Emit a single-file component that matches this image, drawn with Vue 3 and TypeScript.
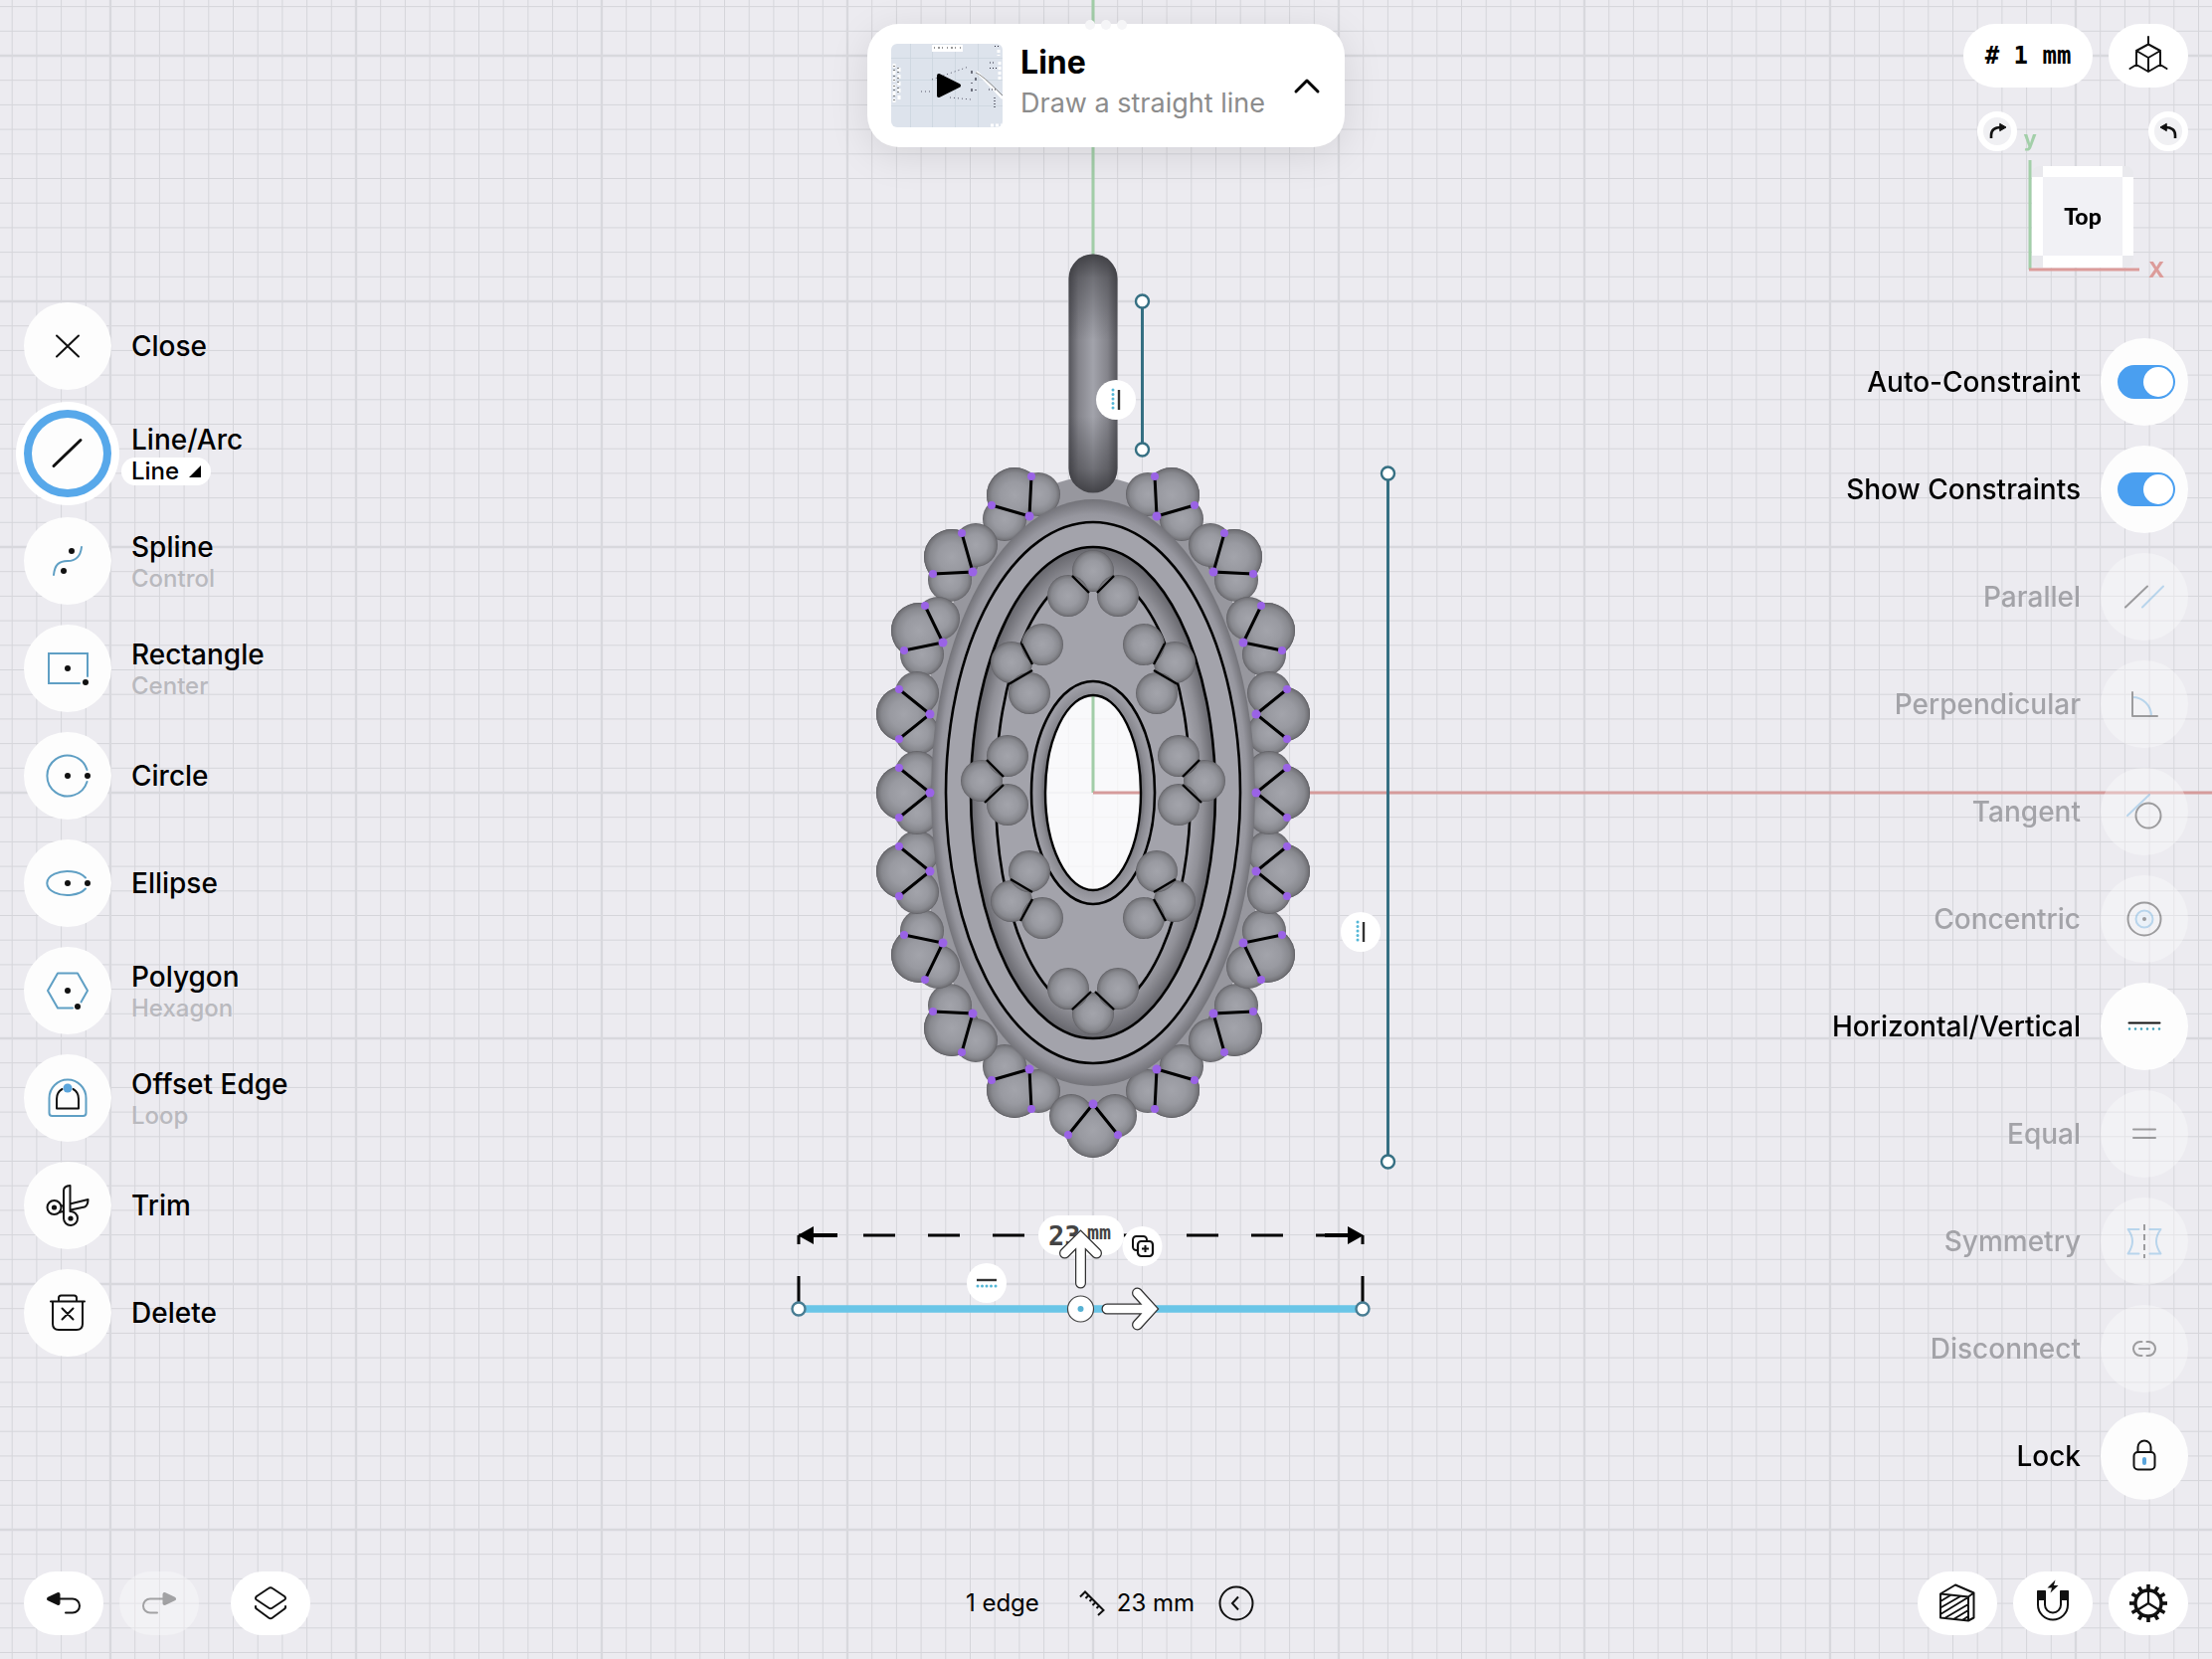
<script setup lang="ts">
import { ref } from 'vue'

interface Tool {
  name: string
  icon: string
  mode?: string
  active?: boolean
}

interface Constraint {
  name: string
  icon: string
  enabled: boolean
}

type Point = [number, number]

interface Cluster {
  big: Point
  small: [Point, Point]
  vertex: Point
  ends: [Point, Point]
}

const blue = '#5f9fc4'
const sky = '#5aa5dc'
const ink = '#111'
const dot = (x: number, y: number, r = 3) => `<circle cx="${x}" cy="${y}" r="${r}" fill="${ink}" stroke="none"/>`

const icons: Record<string, string> = {
  close: '<path d="M-11-10.500L11 10.500M11-10.500L-11 10.500"/>',
  line: '<path d="M-14 12.500L13-13.500" stroke-width="3"/>',
  spline: `<path stroke="${blue}" d="M-14 14C-13 4-9 0 0 0S13-5 14-14"/>${dot(4, -10)}${dot(-4, 10)}`,
  rectangle: `<path stroke="${blue}" stroke-linejoin="miter" d="M12 15H-19V-15H20V8"/>${dot(0, 0)}${dot(18, 14)}`,
  circle: `<path stroke="${blue}" d="M19.500-6A20.500 20.500 0 1 0 19.500 6"/>${dot(0, 0)}${dot(20, 0)}`,
  ellipse: `<path stroke="${blue}" d="M18-5.500A20.500 12 0 1 0 18 5.500"/>${dot(0, 0)}${dot(20, 0)}`,
  polygon: `<path stroke="${blue}" d="M5 17.500H-10L-20 0L-10-17.500H10L20 0L13.500 11.500"/>${dot(0, 0)}${dot(10, 16)}`,
  offset: `<path stroke="${blue}" d="M-18.500 15V0A18.500 18.500 0 0 1 18.500 0V15Q18.500 18 15.500 18H-15.500Q-18.500 18-18.500 15Z"/><path d="M-5.500-9Q-11-6-11 1V10.500H11V1Q11-6 5.500-9"/><circle cx="0" cy="-10" r="4.500" fill="${sky}" stroke="none"/>`,
  trim: `<path d="M-9 7L17 1.500Q20.500 0 20.500-6L-8 1"/><circle cx="-13.500" cy="2" r="7" fill="#fff"/><path fill="#fff" d="M-4 13V-15Q-4-19.500 2.500-20V6A7 7 0 1 1-4 13Z"/>${dot(-13.5, 2, 2.6)}${dot(3, 13, 2.6)}`,
  trash: '<path d="M-17-11.500H17M-9-12V-15Q-9-17.500-6.500-17.500H6.500Q9-17.500 9-15V-12M-15-11V11Q-15 17-9 17H9Q15 17 15 11V-11M-5.500-4.500L5.500 6.500M5.500-4.500L-5.500 6.500"/>',
  parallel: `<path d="M-19 10.500L3-10.500"/><path stroke="${sky}" d="M-2 10.500L19-10.500"/>`,
  perpendicular: `<path stroke="${sky}" d="M-12-7A19 19 0 0 1 7 12"/><path d="M-12-12V12H13"/>`,
  tangent: `<path stroke="${sky}" d="M-17 4L5-17"/><circle cx="4" cy="4" r="12.500"/>`,
  concentric: `<circle r="16.500"/><circle r="8.500" stroke="${sky}" fill="#dff0fb"/>${dot(0, 0, 2)}`,
  horizontal: '<path d="M-15.500-3.500H15.500"/><path stroke="#3e9fb8" stroke-width="2.600" stroke-dasharray="0 6" d="M-15 2.500H16"/>',
  equal: '<path d="M-11-4.500H11M-11 4H11"/>',
  symmetry: `<path stroke="${sky}" d="M-5.500-12H-16.500Q-12-6-12 0T-16.500 12.500H-5.500M5.500-12H16.500Q12-6 12 0T16.500 12.500H5.500"/><path stroke-linecap="butt" stroke-dasharray="6 4" d="M0-17V17"/>`,
  disconnect: '<path d="M-2.500-7H-4A7 7 0 0 0-4 7H-2.500M2.500-7H4A7 7 0 0 1 4 7H2.500M-5 0H5"/>',
  lock: `<rect x="-10.500" y="-4" width="21" height="17.500" rx="4"/><path d="M-6.500-4V-9A6.500 6.500 0 0 1 6.500-9V-4"/><rect x="-2" y="1" width="4" height="8" rx="2" fill="${sky}" stroke="none"/>`,
  views: '<path stroke-width="2" d="M0-11.500L12-5V9L0 16L-12 9V-5ZM-12-5L0 2L12-5M0 2V16M0-11.500V-19M-12 9L-18.500 13M12 9L18.500 13"/>',
  turnLeft: `<path stroke-width="2.600" stroke-linecap="butt" d="M-6 7V4Q-6-4 4-4"/><path fill="${ink}" stroke-width="1" d="M3-7.500L9-4L3-.5Z"/>`,
  turnRight: `<path stroke-width="2.600" stroke-linecap="butt" d="M7 7V4Q7-4-3-4"/><path fill="${ink}" stroke-width="1" d="M-2-7.500L-8-4L-2-.5Z"/>`,
  undo: `<path d="M-4-4.500H9A7 7 0 0 1 9 9.500H2"/><path fill="${ink}" stroke-width="4" d="M-15-4.500L-5.500-9V0Z"/>`,
  redo: `<path d="M4-4.500H-9A7 7 0 0 0-9 9.500H-2"/><path fill="${ink}" stroke-width="4" d="M15-4.500L5.500-9V0Z"/>`,
  layers: '<path d="M-2-15Q0-16.500 2-15L14-7Q16-5 14-3.500L2 4.500Q0 6 -2 4.500L-14-3.500Q-16-5-14-7ZM-15 3Q-15.500 5-13.500 6L-2 14.500Q0 16 2 14.500L13.500 6Q15.500 5 15 3"/>',
  section: '<path stroke-width="2" d="M-17-9.500L-2-18.500L16.500-10.500L11-6.500L-17-9.500V14.500L11 17.500V-6.500M11 17.500L16.500 14.500V-10.500M-17-2L-7-8M-17 4.500L3-7M-17 11L10-5.500M-12 14.500L11 1M-3 15.500L11 7M5 17L11 13"/>',
  magnet: `<path d="M-15-12V1.500A15 15 0 0 0 15 1.500V-12H8V1.500A8 8 0 0 1-8 1.500V-12Z" stroke-width="2"/><path fill="${ink}" stroke="none" d="M-15.500-12.500H-7.500V-3H-15.500ZM7.500-12.500H15.500V-3H7.500ZM2.500-23.500L-5.500-15.500H-1L-2.500-10.500L5.500-18H1Z"/>`,
  gear:
    '<circle r="13" stroke-width="3.400"/><path stroke-width="2.200" d="M0 0V-12M0 0L-10.500 6.500M0 0L10.500 6.500"/>' +
    Array.from({ length: 12 }, (_, i) => `<path stroke-width="3.600" stroke-linecap="butt" d="M0-13V-19" transform="rotate(${i * 30})"/>`).join(''),
}

const tools: Tool[] = [
  { name: 'Close', icon: 'close' },
  { name: 'Line/Arc', icon: 'line', mode: 'Line', active: true },
  { name: 'Spline', icon: 'spline', mode: 'Control' },
  { name: 'Rectangle', icon: 'rectangle', mode: 'Center' },
  { name: 'Circle', icon: 'circle' },
  { name: 'Ellipse', icon: 'ellipse' },
  { name: 'Polygon', icon: 'polygon', mode: 'Hexagon' },
  { name: 'Offset Edge', icon: 'offset', mode: 'Loop' },
  { name: 'Trim', icon: 'trim' },
  { name: 'Delete', icon: 'trash' },
]

const toggles = ref([
  { id: 'auto-constraint', name: 'Auto-Constraint', on: true },
  { id: 'show-constraints', name: 'Show Constraints', on: true },
])

const constraints: Constraint[] = [
  { name: 'Parallel', icon: 'parallel', enabled: false },
  { name: 'Perpendicular', icon: 'perpendicular', enabled: false },
  { name: 'Tangent', icon: 'tangent', enabled: false },
  { name: 'Concentric', icon: 'concentric', enabled: false },
  { name: 'Horizontal/Vertical', icon: 'horizontal', enabled: true },
  { name: 'Equal', icon: 'equal', enabled: false },
  { name: 'Symmetry', icon: 'symmetry', enabled: false },
  { name: 'Disconnect', icon: 'disconnect', enabled: false },
  { name: 'Lock', icon: 'lock', enabled: true },
]

/* Model geometry, relative to the sketch origin */
const upperLeft: Cluster[] = [
  { big: [-79, -299], small: [[-55, -300], [-89, -275]], vertex: [-64, -278], ends: [[-62, -318], [-102, -289]] },
  { big: [-142, -237], small: [[-118, -249], [-144, -214]], vertex: [-121, -222], ends: [[-132, -261], [-161, -220]] },
  { big: [-175, -163], small: [[-156, -175], [-172, -139]], vertex: [-151, -151], ends: [[-169, -188], [-190, -143]] },
  { big: [-190, -79], small: [[-177, -100], [-177, -60]], vertex: [-164, -79], ends: [[-195, -104], [-195, -54]] },
]
const map = (c: Cluster, sx: number, sy: number): Cluster => {
  const f = ([x, y]: Point): Point => [x * sx, y * sy]
  return { big: f(c.big), small: [f(c.small[0]), f(c.small[1])], vertex: f(c.vertex), ends: [f(c.ends[0]), f(c.ends[1])] }
}
const side: Cluster = { big: [-190, 0], small: [[-177, -20], [-177, 20]], vertex: [-164, 0], ends: [[-195, -25], [-195, 25]] }
const clusters: Cluster[] = [
  ...upperLeft.flatMap((c) => [map(c, 1, 1), map(c, -1, 1), map(c, 1, -1), map(c, -1, -1)]),
  side,
  map(side, -1, 1),
  { big: [0, 339], small: [[-22, 325], [22, 325]], vertex: [0, 313], ends: [[-25, 344], [25, 344]] },
]
const wedge = (c: Cluster) => {
  const far = ([x, y]: Point, k: number) => `${c.vertex[0] + (x - c.vertex[0]) * k},${c.vertex[1] + (y - c.vertex[1]) * k}`
  return [c.vertex.join(','), far(c.ends[0], 2), far(c.big, 5), far(c.ends[1], 2)].join(' ')
}

const centreBeads: Point[] = [[0, -223], [-25, -198], [25, -198], [0, 222], [-25, 197], [25, 197]]
const leftBeads: Point[] = [
  [-82, -131], [-51, -149], [-64, -100],
  [-112, -12], [-86, -37], [-86, 12],
  [-82, 109], [-64, 79], [-51, 126],
]
const beads: Point[] = [...centreBeads, ...leftBeads.flatMap(([x, y]): Point[] => [[x, y], [-x, y]])]
const centreSeams = 'M-21-218L-4-201M21-218L4-201M-21 218L-2 200M21 218L2 200'
const sideSeams = 'M-72-150L-61-129M-61-123L-85-109M-107-33L-90-16M-90-8L-109 10M-83 87L-61 100M-61 107L-73 129'
</script>

<template>
  <main class="app">
    <svg class="scene" viewBox="0 0 2224 1668" preserveAspectRatio="xMidYMid slice" aria-label="Sketch canvas">
      <defs>
        <pattern id="minor" x="1098.500" y="796.500" width="24.700" height="24.700" patternUnits="userSpaceOnUse">
          <path d="M.5 0V24.700M0 .5H24.700" stroke="#d5d5da" stroke-width="1" fill="none" />
        </pattern>
        <pattern id="major" x="1097" y="795" width="247" height="247" patternUnits="userSpaceOnUse">
          <path d="M2 0V247M0 2H247" stroke="#d8d8dd" stroke-width="2.400" fill="none" />
        </pattern>
        <radialGradient id="ball">
          <stop offset="0" stop-color="#a3a4ab" />
          <stop offset=".5" stop-color="#999aa1" />
          <stop offset=".8" stop-color="#88898f" />
          <stop offset=".94" stop-color="#747479" />
          <stop offset="1" stop-color="#5d5d62" />
        </radialGradient>
        <radialGradient id="rim">
          <stop offset=".89" stop-color="#a3a3ab" />
          <stop offset=".95" stop-color="#96969e" />
          <stop offset="1" stop-color="#737379" />
        </radialGradient>
        <radialGradient id="trough">
          <stop offset=".82" stop-color="#a2a2aa" />
          <stop offset=".9" stop-color="#909097" />
          <stop offset="1" stop-color="#66666c" />
        </radialGradient>
        <radialGradient id="lip">
          <stop offset=".78" stop-color="#67676d" />
          <stop offset=".86" stop-color="#8a8a91" />
          <stop offset="1" stop-color="#a3a3ab" />
        </radialGradient>
        <linearGradient id="bail">
          <stop offset="0" stop-color="#54545a" />
          <stop offset=".2" stop-color="#84848b" />
          <stop offset=".5" stop-color="#a2a3ab" />
          <stop offset=".8" stop-color="#84848b" />
          <stop offset="1" stop-color="#54545a" />
        </linearGradient>
        <linearGradient id="bail-ends" x2="0" y2="1">
          <stop offset="0" stop-color="#2c2c30" stop-opacity=".8" />
          <stop offset=".1" stop-color="#2c2c30" stop-opacity=".42" />
          <stop offset=".36" stop-color="#2c2c30" stop-opacity="0" />
          <stop offset=".68" stop-color="#2c2c30" stop-opacity="0" />
          <stop offset=".9" stop-color="#2c2c30" stop-opacity=".42" />
          <stop offset="1" stop-color="#2c2c30" stop-opacity=".8" />
        </linearGradient>
        <mask id="opening" maskUnits="userSpaceOnUse" x="-260" y="-560" width="520" height="940">
          <rect x="-260" y="-560" width="520" height="940" fill="#fff" />
          <ellipse rx="48" ry="98" fill="#000" />
        </mask>
        <clipPath v-for="(c, i) in clusters" :id="`wedge-${i}`" :key="i">
          <polygon :points="wedge(c)" />
        </clipPath>
      </defs>

      <rect x="-2000" y="-2000" width="6224" height="5668" fill="#ecebf0" />
      <rect x="-2000" y="-2000" width="6224" height="5668" fill="url(#minor)" />
      <rect x="-2000" y="-2000" width="6224" height="5668" fill="url(#major)" />

      <g transform="translate(1099 797)">
        <ellipse rx="48" ry="98" fill="#fff" fill-opacity=".7" />
        <path d="M0-2800V0" stroke="#a2cda8" stroke-width="3" />
        <path d="M0 0H3200" stroke="#d59b9b" stroke-width="3" />

        <g mask="url(#opening)">
          <ellipse rx="176" ry="318" fill="#97979e" />
          <template v-for="(c, i) in clusters" :key="i">
            <circle :cx="c.big[0]" :cy="c.big[1]" r="28" fill="url(#ball)" />
            <circle v-for="(s, j) in c.small" :key="j" :cx="s[0]" :cy="s[1]" r="22" fill="url(#ball)" />
            <circle :cx="c.big[0]" :cy="c.big[1]" r="28" fill="url(#ball)" :clip-path="`url(#wedge-${i})`" />
          </template>
          <ellipse rx="163" ry="295" fill="url(#rim)" />
          <g stroke="#000" stroke-width="2.600">
            <ellipse rx="148" ry="272" fill="#a3a3ab" />
            <ellipse rx="123" ry="247" fill="url(#trough)" />
            <ellipse rx="98" ry="222" fill="#a3a3ab" />
            <ellipse rx="62" ry="112" fill="url(#lip)" />
          </g>
          <circle v-for="(b, i) in beads" :key="i" :cx="b[0]" :cy="b[1]" r="21" fill="url(#ball)" />
          <g fill="none" stroke="#000" stroke-width="2.400">
            <path :d="centreSeams" />
            <path :d="sideSeams" />
            <path :d="sideSeams" transform="scale(-1 1)" />
          </g>
          <g v-for="(c, i) in clusters" :key="`s${i}`">
            <path :d="`M${c.ends[0]}L${c.vertex}L${c.ends[1]}`" fill="none" stroke="#000" stroke-width="3" />
            <circle :cx="c.vertex[0]" :cy="c.vertex[1]" r="4.500" fill="#9a63e6" />
            <circle v-for="(e, j) in c.ends" :key="j" :cx="e[0]" :cy="e[1]" r="4" fill="#9a63e6" />
          </g>
        </g>
        <ellipse rx="48" ry="98" fill="none" stroke="#000" stroke-width="2.400" />
        <rect x="-24.500" y="-541.500" width="49" height="240" rx="24.500" fill="url(#bail)" />
        <rect x="-24.500" y="-541.500" width="49" height="240" rx="24.500" fill="url(#bail-ends)" />
      </g>

      <g stroke="#356f82" fill="#fff">
        <path d="M1148.500 303V452M1395.500 476V1168" stroke-width="3" />
        <g stroke-width="2.400">
          <circle cx="1148.500" cy="303" r="6.500" />
          <circle cx="1148.500" cy="452" r="6.500" />
          <circle cx="1395.500" cy="476" r="6.500" />
          <circle cx="1395.500" cy="1168" r="6.500" />
        </g>
      </g>

      <g v-for="p in [[1122, 402], [1368, 937]]" :key="p[0]" :transform="`translate(${p})`">
        <circle r="20" fill="#fff" />
        <path d="M-3-10V11" stroke="#55b7d6" stroke-width="3" stroke-dasharray="0 4.500" stroke-linecap="round" />
        <path d="M3-10V10" stroke="#333" stroke-width="2.400" />
      </g>

      <path d="M803 1242H1370" stroke="#000" stroke-width="3" stroke-dasharray="32 33" />
      <path d="M803 1242V1251M803 1283V1310M1370 1242V1251M1370 1283V1310" stroke="#000" stroke-width="3" />
      <path d="M815 1242H842M1358 1242H1332" stroke="#000" stroke-width="4" />
      <path d="M802 1242L818 1233V1251ZM1371 1242L1355 1233V1251Z" />
      <path d="M803 1316H1370" stroke="#69c5e7" stroke-width="7.500" />
      <g fill="#fff" stroke="#487d93" stroke-width="2.400">
        <circle cx="803" cy="1316" r="6.500" />
        <circle cx="1370" cy="1316" r="6.500" />
      </g>

      <g transform="translate(992 1290)">
        <circle r="20" fill="#fff" />
        <path d="M-10-3H10" stroke="#333" stroke-width="2.400" />
        <path d="M-9 3H11" stroke="#55b7d6" stroke-width="3" stroke-dasharray="0 4.500" stroke-linecap="round" />
      </g>

      <rect x="1044" y="1222" width="86" height="40" rx="20" fill="#fff" />
      <text class="mono" x="1054" y="1252" font-size="27" fill="#444">23</text>
      <text class="mono" x="1093" y="1246" font-size="20" fill="#444">mm</text>

      <g transform="translate(1148.500 1253)">
        <circle r="20" fill="#fff" />
        <rect x="-9.500" y="-10" width="14" height="14" rx="3.500" fill="#fff" stroke="#111" stroke-width="2" />
        <rect x="-4.500" y="-5" width="15" height="15" rx="3.500" fill="#fff" stroke="#111" stroke-width="2.200" />
        <path d="M3-1V6M-.5 2.500H6.500" stroke="#111" stroke-width="2" />
      </g>

      <g fill="none" stroke-linecap="round" stroke-linejoin="miter">
        <g stroke="#333" stroke-width="11">
          <path d="M1086.500 1290V1246M1070.500 1260L1086.500 1244L1102.500 1260" />
          <path d="M1113 1316H1157M1143.500 1300L1158 1316L1143.500 1332" />
        </g>
        <g stroke="#fff" stroke-width="8.500">
          <path d="M1086.500 1290V1246M1070.500 1260L1086.500 1244L1102.500 1260" />
          <path d="M1113 1316H1157M1143.500 1300L1158 1316L1143.500 1332" />
        </g>
      </g>
      <circle cx="1086.500" cy="1316" r="13" fill="#fff" stroke="#444" stroke-width="1.200" />
      <circle cx="1086.500" cy="1316" r="3" fill="#56b1d3" />
    </svg>

    <nav class="tools" aria-label="Sketch tools">
      <div v-for="t in tools" :key="t.name" class="tool">
        <button class="disc" :class="{ active: t.active }" :aria-label="t.name">
          <svg class="icon" viewBox="-24 -24 48 48" v-html="icons[t.icon]" />
        </button>
        <div class="labels">
          <span class="name">{{ t.name }}</span>
          <button v-if="t.mode" class="mode" :class="{ current: t.active }">
            {{ t.mode }}
            <svg v-if="t.active" class="corner" viewBox="0 0 12 12"><path d="M12 0V12H0Z" /></svg>
          </button>
        </div>
      </div>
    </nav>

    <section class="card">
      <button class="thumb" aria-label="Play tutorial">
        <svg viewBox="0 0 112 84">
          <rect width="112" height="84" fill="#dde3ec" />
          <path d="M19.500 0V84M41.500 0V84M64.500 0V84M87.500 0V84M0 14.500H112M0 36.500H112M0 62.500H112" stroke="#ccd5de" stroke-width=".8" />
          <rect x="41" y="1" width="31" height="7" fill="#fff" />
          <path d="M43 4H70" stroke="#333" stroke-width="1.200" stroke-dasharray="1 3 2 2 1 4" />
          <path d="M3 20V60M8 24V56" stroke="#fff" stroke-width="3" stroke-dasharray="4 3" />
          <path d="M3 22V58M7 24V54" stroke="#333" stroke-width="1.200" stroke-dasharray="1 3 1 5" />
          <path d="M41 36L78 23M30 48H42M59 54L80 56" fill="none" stroke="#556" stroke-dasharray="1 3" />
          <path d="M81 27V57M85 34V50" stroke="#223" stroke-width="1.200" stroke-dasharray="3 9 1 5" />
          <path d="M86 28L112 55" stroke="#fff" stroke-width="2.500" />
          <path d="M85 29Q90 30 112 52" fill="none" stroke="#888" />
          <path d="M104 2.500H109M99 19H104M99 24.500H109M98 46H107M104 54V66" stroke="#223" stroke-width="1.200" stroke-dasharray="1 2" />
          <path d="M108 6V12M109 18V36M100 82H111" stroke="#fff" stroke-width="3" stroke-dasharray="3 2" />
          <path d="M48 32L68 42L48 52Z" stroke="#000" stroke-width="4" stroke-linejoin="round" />
        </svg>
      </button>
      <div class="card-text">
        <h1>Line</h1>
        <p>Draw a straight line</p>
      </div>
      <button class="collapse" aria-label="Collapse">
        <svg viewBox="0 0 28 18"><path d="M3 15L14 4L25 15" /></svg>
      </button>
      <span class="grabber" aria-hidden="true"><i /><i /><i /></span>
    </section>

    <aside class="right">
      <div class="row">
        <button class="pill unit"># 1 mm</button>
        <button class="pill" aria-label="Views">
          <svg class="icon" viewBox="-24 -24 48 48" v-html="icons.views" />
        </button>
      </div>

      <div class="orientation">
        <svg class="gizmo" viewBox="0 0 212 180">
          <path d="M53 49V159" stroke="#a3cfa9" stroke-width="3" />
          <path d="M52 159H163" stroke="#dc9c9a" stroke-width="3" />
          <rect x="55" y="55" width="102" height="102" rx="8" fill="#e9e9ed" />
          <path d="M66 55H146V157H66ZM55 66H157V145H55Z" fill="#fff" />
          <rect x="66" y="66" width="80" height="79" fill="#f1f1f5" />
          <text class="face" x="106" y="114" text-anchor="middle">Top</text>
          <text class="axis" x="53" y="35" text-anchor="middle" fill="#a3cfa9">y</text>
          <text class="axis" x="180" y="167" text-anchor="middle" fill="#dc9c9a">X</text>
        </svg>
        <div class="turns">
          <button class="turn" aria-label="Rotate clockwise">
            <svg class="icon small" viewBox="-14 -14 28 28" v-html="icons.turnLeft" />
          </button>
          <button class="turn" aria-label="Rotate counter-clockwise">
            <svg class="icon small" viewBox="-14 -14 28 28" v-html="icons.turnRight" />
          </button>
        </div>
      </div>

      <div class="constraints">
        <div v-for="t in toggles" :key="t.id" class="tool">
          <label class="name" :for="t.id">{{ t.name }}</label>
          <span class="disc"><input :id="t.id" v-model="t.on" type="checkbox" role="switch" class="switch" /></span>
        </div>
        <div v-for="c in constraints" :key="c.name" class="tool" :class="{ off: !c.enabled }">
          <span class="name">{{ c.name }}</span>
          <button class="disc" :disabled="!c.enabled" :aria-label="c.name">
            <svg class="icon" viewBox="-24 -24 48 48" v-html="icons[c.icon]" />
          </button>
        </div>
      </div>
    </aside>

    <div class="row history">
      <button class="pill" aria-label="Undo"><svg class="icon" viewBox="-24 -24 48 48" v-html="icons.undo" /></button>
      <button class="pill faded" disabled aria-label="Redo"><svg class="icon" viewBox="-24 -24 48 48" v-html="icons.redo" /></button>
      <button class="pill items" aria-label="Items"><svg class="icon" viewBox="-24 -24 48 48" v-html="icons.layers" /></button>
    </div>

    <div class="status">
      <span>1 edge</span>
      <svg class="ruler" viewBox="0 0 26 26"><path d="M1 6.500L6 1.500L24.500 20L19 25M9.500 5L6.500 8M13 8.500L10.500 11M16.500 12L13.500 15M20 15.500L17.500 18" /></svg>
      <span>23 mm</span>
      <button class="back" aria-label="Show measurements">
        <svg viewBox="0 0 36 36"><circle cx="18" cy="18" r="16.500" /><path d="M20 11.500L14 18L20 24.500" /></svg>
      </button>
    </div>

    <div class="row settings">
      <button class="pill" aria-label="Section view"><svg class="icon" viewBox="-24 -24 48 48" v-html="icons.section" /></button>
      <button class="pill" aria-label="Snapping"><svg class="icon" viewBox="-24 -24 48 48" v-html="icons.magnet" /></button>
      <button class="pill" aria-label="Settings"><svg class="icon" viewBox="-24 -24 48 48" v-html="icons.gear" /></button>
    </div>
  </main>
</template>

<style>
body {
  background: #ecebf0;
}
</style>

<style scoped>
.app {
  position: relative;
  box-sizing: border-box;
  min-height: 100vh;
  padding: 24px;
  display: grid;
  grid-template-columns: 1fr auto 1fr;
  grid-template-rows: 64px 1fr 64px;
  overflow: hidden;
  font-family: Inter, 'Liberation Sans', sans-serif;
  color: #000;
}

.app > * {
  position: relative;
}

.app > .scene {
  position: absolute;
  inset: 0;
  width: 100%;
  height: 100%;
}

button {
  border: 0;
  padding: 0;
  margin: 0;
  background: none;
  font: inherit;
  color: inherit;
}

svg {
  display: block;
}

.mono {
  font-family: 'DejaVu Sans Mono', monospace;
  font-weight: 700;
}

.icon {
  width: 48px;
  height: 48px;
  fill: none;
  stroke: #111;
  stroke-width: 2;
  stroke-linecap: round;
  stroke-linejoin: round;
}

.icon.small {
  width: 28px;
  height: 28px;
}

.tools {
  grid-area: 2 / 1;
  align-self: center;
  justify-self: start;
  display: flex;
  flex-direction: column;
  gap: 20px;
}

.tool {
  display: flex;
  align-items: center;
  gap: 20px;
}

.disc {
  flex: none;
  width: 88px;
  height: 88px;
  border-radius: 50%;
  background: #fdfdfd;
  display: flex;
  align-items: center;
  justify-content: center;
}

.disc.active {
  box-shadow: inset 0 0 0 8px #57a8ea, 0 0 0 8px #fff;
}

.labels {
  display: flex;
  flex-direction: column;
  align-items: flex-start;
}

.name {
  font-size: 28px;
  line-height: 36px;
  font-weight: 500;
}

.mode {
  display: flex;
  align-items: center;
  gap: 10px;
  font-size: 24px;
  line-height: 28px;
  font-weight: 500;
  color: #b9b9be;
}

.mode.current {
  margin-left: -10px;
  padding: 0 10px;
  border-radius: 14px;
  background: #fff;
  color: #000;
}

.corner {
  width: 12px;
  height: 12px;
}

.card {
  grid-area: 1 / 2 / 3 / 3;
  align-self: start;
  box-sizing: border-box;
  height: 124px;
  padding: 20px 24px;
  border-radius: 32px;
  background: #fff;
  box-shadow: 0 8px 40px rgba(0, 0, 0, 0.1);
  display: flex;
  align-items: center;
}

.thumb {
  width: 112px;
  height: 84px;
  border-radius: 6px;
  overflow: hidden;
}

.card-text {
  align-self: flex-start;
  margin: 0 28px 0 18px;
}

h1 {
  margin: 0;
  font-size: 32px;
  line-height: 38px;
  font-weight: 700;
}

p {
  margin: 0;
  font-size: 27px;
  line-height: 44px;
  color: #8c8c8c;
}

.collapse svg {
  width: 28px;
  height: 18px;
  fill: none;
  stroke: #000;
  stroke-width: 3;
  stroke-linecap: round;
  stroke-linejoin: round;
}

.grabber {
  position: absolute;
  top: -4px;
  left: 0;
  right: 0;
  display: flex;
  justify-content: center;
  gap: 6px;
}

.grabber i {
  width: 10px;
  height: 10px;
  border-radius: 50%;
  background: #f5f5f7;
}

.right {
  grid-area: 1 / 3 / 3 / 4;
  display: flex;
  flex-direction: column;
  align-items: flex-end;
}

.row {
  display: flex;
  gap: 16px;
}

.pill {
  width: 80px;
  height: 64px;
  border-radius: 32px;
  background: #fff;
  display: flex;
  align-items: center;
  justify-content: center;
}

.pill.faded {
  background: rgba(255, 255, 255, 0.35);
}

.faded .icon {
  opacity: 0.35;
}

.pill.items {
  margin-left: 16px;
}

.unit {
  width: 130px;
  font-family: 'DejaVu Sans Mono', monospace;
  font-size: 24px;
  font-weight: 700;
}

.orientation {
  margin-top: 24px;
  display: grid;
}

.orientation > * {
  grid-area: 1 / 1;
}

.gizmo {
  width: 212px;
  height: 180px;
}

.face {
  font-family: Lato, sans-serif;
  font-size: 23px;
  font-weight: 900;
}

.axis {
  font-family: Inter, sans-serif;
  font-size: 22px;
  font-weight: 700;
}

.turns {
  align-self: start;
  display: flex;
  justify-content: space-between;
}

.turn {
  width: 40px;
  height: 40px;
  box-sizing: border-box;
  border: 6px solid #fff;
  border-radius: 50%;
  background: #f0f0f3;
}

.constraints {
  margin-top: 48px;
  display: flex;
  flex-direction: column;
  align-items: flex-end;
  gap: 20px;
}

.switch {
  appearance: none;
  width: 58px;
  height: 34px;
  margin: 0 0 0 4px;
  border-radius: 17px;
  background: #c9c9ce;
  display: flex;
  align-items: center;
}

.switch::before {
  content: '';
  width: 30px;
  height: 30px;
  margin: 0 2px;
  border-radius: 50%;
  background: #fff;
}

.switch:checked {
  background: #4a9ff0;
  justify-content: flex-end;
}

.off .name {
  color: #a3a3a8;
}

.off .disc {
  background: rgba(255, 255, 255, 0.35);
}

.off .icon {
  opacity: 0.38;
}

.history {
  grid-area: 3 / 1;
}

.settings {
  grid-area: 3 / 3;
  justify-self: end;
}

.status {
  grid-area: 3 / 2;
  justify-self: center;
  padding-left: 8px;
  display: flex;
  align-items: center;
  font-size: 24px;
  line-height: 32px;
}

.ruler {
  width: 26px;
  height: 26px;
  margin: 0 12px 0 40px;
  fill: none;
  stroke: #111;
  stroke-width: 2;
}

.back {
  margin-left: 24px;
}

.back svg {
  width: 36px;
  height: 36px;
  fill: none;
  stroke: #111;
  stroke-width: 2;
}
</style>
